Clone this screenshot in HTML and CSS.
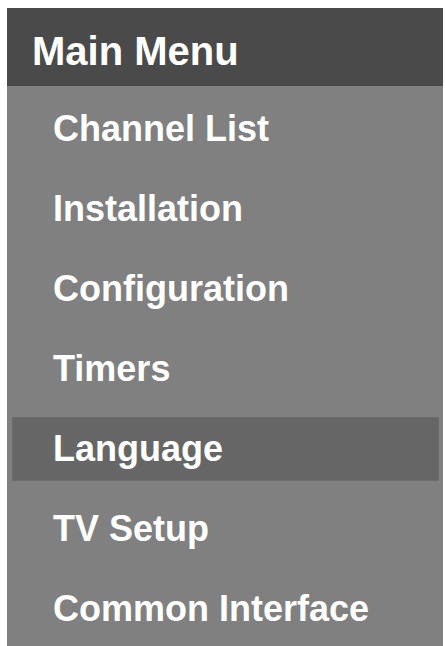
FILE: index.html
```html
<!DOCTYPE html>
<html>
<head>
<meta charset="utf-8">
<link rel="stylesheet" href="styles.css">
</head>
<body>
<div class="panel">
  <div class="header">Main Menu</div>
  <div class="list">
    <div class="item">Channel List</div>
    <div class="item">Installation</div>
    <div class="item">Configuration</div>
    <div class="item">Timers</div>
    <div class="item selected">Language</div>
    <div class="item">TV Setup</div>
    <div class="item">Common Interface</div>
  </div>
</div>
</body>
</html>
```
FILE: styles.css
```css
html, body {
  margin: 0;
  padding: 0;
  background: #ffffff;
  overflow: hidden;
}
body {
  font-family: "Liberation Sans", Arial, sans-serif;
  font-weight: bold;
  color: #ffffff;
}
.panel {
  margin: 8px 2px 0 7px;
  height: 638px;
  background: #808080;
  display: flex;
  flex-direction: column;
}
.header {
  box-sizing: border-box;
  height: 78px;
  padding: 20px 0 0 25px;
  line-height: 46px;
  font-size: 40px;
  background: #4a4a4a;
}
.list {
  display: flex;
  flex-direction: column;
  gap: 16px;
  padding: 11px 4px 0 5px;
}
.item {
  height: 64px;
  line-height: 64px;
  font-size: 36px;
  padding-left: 41px;
}
.item.selected {
  background: #666666;
  box-shadow: inset 0 0 0 1px #6c6c6c;
}
```
